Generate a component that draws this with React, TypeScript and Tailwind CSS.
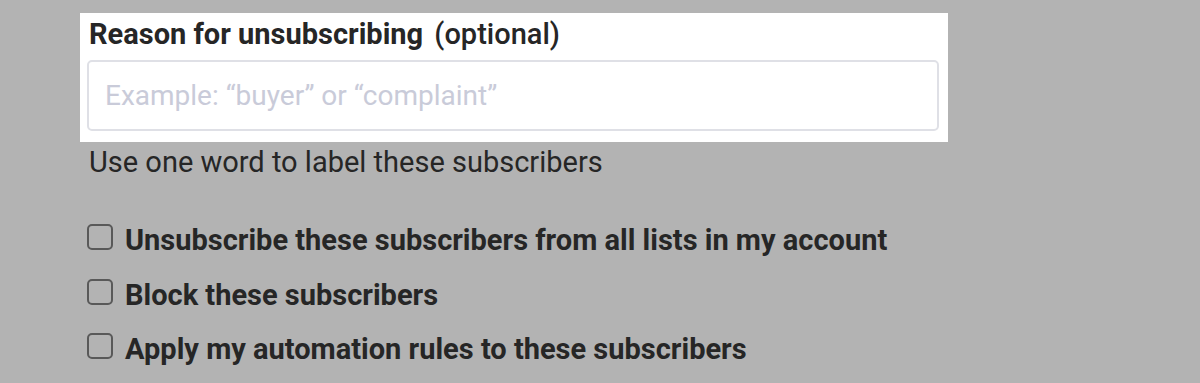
import { useState } from 'react';

const options = [
  'Unsubscribe these subscribers from all lists in my account',
  'Block these subscribers',
  'Apply my automation rules to these subscribers',
];

export default function App() {
  const [checked, setChecked] = useState<boolean[]>([false, false, false]);

  return (
    <div className="h-[383px] w-[1200px] overflow-hidden bg-[#b3b3b3] pl-[80px] pt-[13px] text-[#262626]" style={{ fontFamily: 'Roboto, "Noto Sans", sans-serif' }}>
      <div className="w-[868px] bg-white px-[7px] pb-[11px] pt-[4px]">
        <label className="block pl-[2px] text-[29px] font-bold leading-[34px]">
          Reason for unsubscribing <span className="ml-1 font-medium">(optional)</span>
        </label>
        <input
          type="text"
          placeholder="Example: “buyer” or “complaint”"
          className="mt-[9px] h-[71px] w-[852px] rounded-[5px] border-2 border-[#dfe0e6] px-[16px] text-[28px] outline-none placeholder:text-[#c9cbd9]"
        />
      </div>
      <p className="mt-[3px] pl-[9px] text-[29px] leading-[34px]">Use one word to label these subscribers</p>

      <div className="mt-[44px] flex flex-col gap-[20.5px] pl-[7px]">
        {options.map((opt, i) => (
          <label key={opt} className="flex items-start gap-[12px] text-[29px] font-bold leading-[34px]">
            <span
              onClick={() => setChecked(c => c.map((v, j) => (j === i ? !v : v)))}
              className={`mt-[1px] h-[26px] w-[26px] shrink-0 rounded-[5px] border-2 border-[#595959] ${checked[i] ? 'bg-[#595959]' : ''}`}
            />
            {opt}
          </label>
        ))}
      </div>
    </div>
  );
}
